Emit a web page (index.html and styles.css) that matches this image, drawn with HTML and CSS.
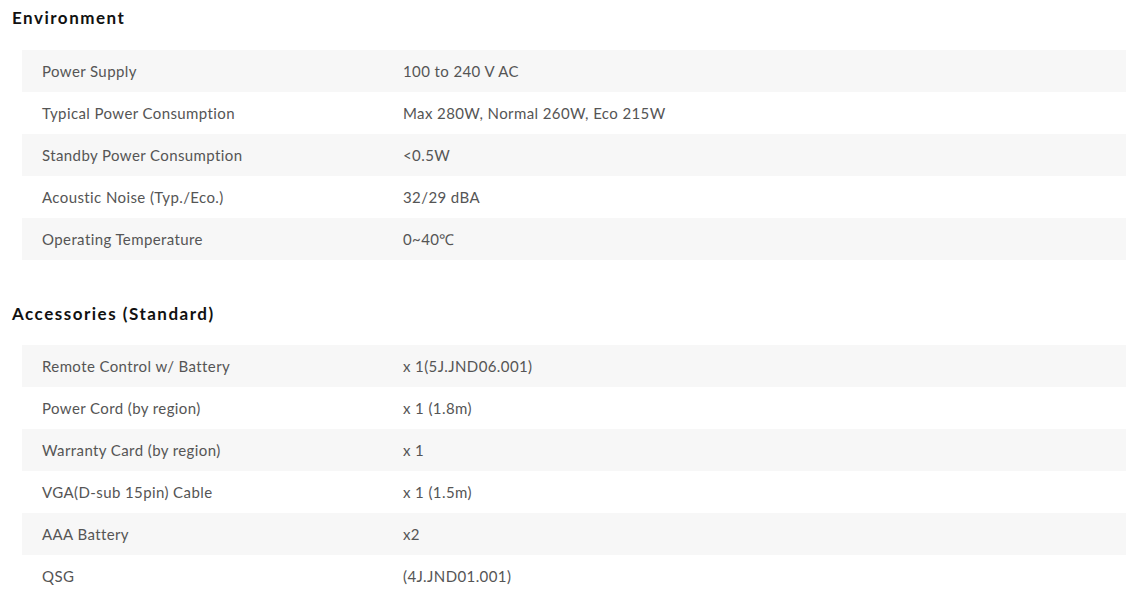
FILE: index.html
```html
<!DOCTYPE html>
<html>
<head>
<meta charset="utf-8">
<link rel="stylesheet" href="styles.css">
</head>
<body>
<section class="spec">
  <h2 class="spec-title">Environment</h2>
  <div class="spec-table">
    <div class="row"><div class="label">Power Supply</div><div class="value">100 to 240 V AC</div></div>
    <div class="row"><div class="label">Typical Power Consumption</div><div class="value">Max 280W, Normal 260W, Eco 215W</div></div>
    <div class="row"><div class="label">Standby Power Consumption</div><div class="value">&lt;0.5W</div></div>
    <div class="row"><div class="label">Acoustic Noise (Typ./Eco.)</div><div class="value">32/29 dBA</div></div>
    <div class="row"><div class="label">Operating Temperature</div><div class="value">0~40℃</div></div>
  </div>
</section>
<section class="spec">
  <h2 class="spec-title">Accessories (Standard)</h2>
  <div class="spec-table">
    <div class="row"><div class="label">Remote Control w/ Battery</div><div class="value">x 1(5J.JND06.001)</div></div>
    <div class="row"><div class="label">Power Cord (by region)</div><div class="value">x 1 (1.8m)</div></div>
    <div class="row"><div class="label">Warranty Card (by region)</div><div class="value">x 1</div></div>
    <div class="row"><div class="label">VGA(D-sub 15pin) Cable</div><div class="value">x 1 (1.5m)</div></div>
    <div class="row"><div class="label">AAA Battery</div><div class="value">x2</div></div>
    <div class="row"><div class="label">QSG</div><div class="value">(4J.JND01.001)</div></div>
  </div>
</section>
</body>
</html>
```
FILE: styles.css
```css
html, body {
  margin: 0;
  padding: 0;
  background: #fff;
}
body {
  font-family: Lato, "Open Sans", sans-serif;
  color: #555;
  padding: 0 1px 0 12px;
}
.spec {
  display: flex;
  flex-direction: column;
}
.spec + .spec {
  margin-top: 35px;
}
.spec-title {
  margin: 0;
  height: 50px;
  padding-top: 8px;
  box-sizing: border-box;
  font-size: 17px;
  font-weight: 700;
  letter-spacing: 1.5px;
  color: #111;
  line-height: 20px;
}
.spec + .spec .spec-title {
  padding-top: 9px;
}
.spec-table {
  margin-left: 10px;
  display: flex;
  flex-direction: column;
}
.row {
  display: grid;
  grid-template-columns: 361px 1fr;
  height: 42px;
  align-items: center;
  padding-left: 20px;
  font-size: 15px;
  letter-spacing: 0.4px;
}
.row:nth-child(odd) {
  background: #f7f7f7;
}
```
